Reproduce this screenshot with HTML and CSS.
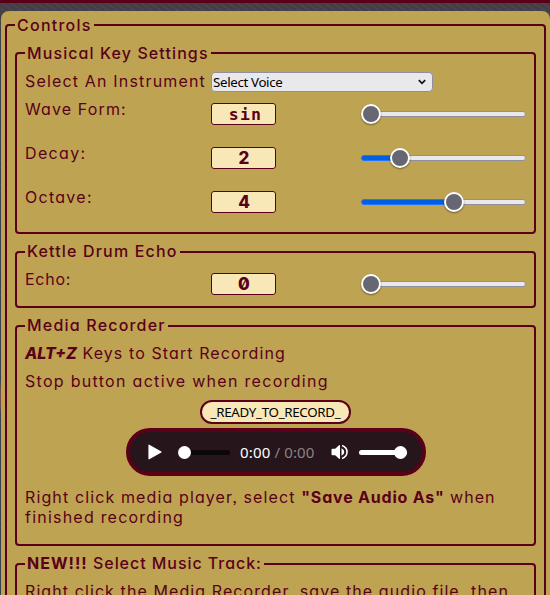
FILE: index.html
```html
<!DOCTYPE html>
<html lang="en">
<head>
<meta charset="utf-8">
<title>Controls</title>
<link rel="stylesheet" href="styles.css">
</head>
<body>
<main class="panel">
  <fieldset class="group outer">
    <legend><span class="t-controls">Controls</span></legend>

    <fieldset class="group keys">
      <legend><span class="t-keys">Musical Key Settings</span></legend>
      <div class="instrument">
        <label class="t-instrument" for="voice">Select An Instrument</label>
        <div class="select" id="voice"><span>Select Voice</span>
          <svg width="10" height="8" viewBox="0 0 10 8"><path d="M1.8 2.2 5 5.4 8.2 2.2" fill="none" stroke="#111" stroke-width="1.7"/></svg>
        </div>
      </div>
      <div class="row"><span class="name t-wave">Wave Form:</span><output class="word">sin</output><div class="slider"><i class="fill" style="width:10px"></i><i class="thumb"></i></div></div>
      <div class="row"><span class="name t-decay">Decay:</span><output>2</output><div class="slider"><i class="fill" style="width:39px"></i><i class="thumb"></i></div></div>
      <div class="row"><span class="name t-octave">Octave:</span><output>4</output><div class="slider"><i class="fill" style="width:93px"></i><i class="thumb"></i></div></div>
    </fieldset>

    <fieldset class="group echo">
      <legend><span class="t-kettle">Kettle Drum Echo</span></legend>
      <div class="row"><span class="name t-echo">Echo:</span><output>0</output><div class="slider"><i class="fill" style="width:10px"></i><i class="thumb"></i></div></div>
    </fieldset>

    <fieldset class="group recorder">
      <legend><span class="t-media">Media Recorder</span></legend>
      <p class="first"><b class="alt">ALT+Z</b> <span class="t-start">Keys to Start Recording</span></p>
      <p><span class="t-stop">Stop button active when recording</span></p>
      <div class="ready"><span>_READY_TO_RECORD_</span></div>
      <div class="player">
        <svg class="play" width="14" height="16" viewBox="0 0 14 16"><path d="M1 1.2 13 8 1 14.8Z" fill="#fff" stroke="#fff" stroke-width="1.2" stroke-linejoin="round"/></svg>
        <div class="seek"><i></i></div>
        <div class="time">0:00 <span>/ 0:00</span></div>
        <svg class="speaker" width="18" height="16" viewBox="0 0 18 16"><path d="M1.5 4.7h2.7L8 1.2q1-.8 1 .5v12.6q0 1.3-1 .5L4.200 11.300H1.500Q.5 11.300.5 10.300V5.700Q.5 4.700 1.500 4.700Z" fill="#fff"/><path d="M10.500 4.200q2.800 1.100 2.800 3.800t-2.800 3.800Z" fill="#fff"/><path d="M11 1.500Q16 3.200 16 8t-5 6.500" fill="none" stroke="#fff" stroke-width="1.600"/></svg>
        <div class="volume"><i></i></div>
      </div>
      <p class="hint"><span class="t-right">Right click media player, select </span><b class="t-save">"Save Audio As"</b><span> when</span><br><span class="t-finished">finished recording</span></p>
    </fieldset>

    <fieldset class="group track">
      <legend><b class="t-new">NEW!!!</b> <span class="t-track">Select Music Track:</span></legend>
      <p class="first"><span class="t-last">Right click the Media Recorder, save the audio file, then</span></p>
    </fieldset>
  </fieldset>
</main>
</body>
</html>
```
FILE: styles.css
```css
* { box-sizing: border-box; }
html { height: 595px; overflow: hidden; }
body {
  margin: 0;
  height: 595px;
  overflow: hidden;
  padding: 8px 0 0 1px;
  border-top: 3px solid #5a0018;
  background:
    repeating-linear-gradient(35deg, rgba(255, 255, 255, .03) 0 2px, transparent 2px 5px),
    linear-gradient(#443e46 0 12px, #34404f 60px 240px, #34404f 380px, #734b43 390px 405px, #34404f 415px);
  color: #5a0018;
  font: 400 16px/20px Inter, sans-serif;
  font-feature-settings: "cv11", "ss03";
  letter-spacing: 1px;
}
.panel {
  height: 584px;
  overflow: hidden;
  padding: 4px;
  background: #bea452;
  border-radius: 8px 8px 0 0;
}
.group {
  margin: 0;
  min-width: 0;
  border: 2px solid #5a0018;
  border-radius: 4px;
  padding: 8px;
}
.outer { width: 541px; height: 640px; }
.group .group { width: 521px; margin-bottom: 8px; }
legend {
  height: 20px;
  padding: 0 2px;
  font-weight: 500;
  white-space: nowrap;
}
.echo legend, .recorder legend, .track legend { line-height: 18px; }
.group .keys { height: 191px; }
.group .echo { height: 66px; }
.group .recorder { height: 230px; }
.group .track { height: 80px; }

.instrument { display: flex; height: 21px; white-space: nowrap; }
.instrument label { width: 186px; }
.select {
  display: flex;
  align-items: center;
  justify-content: space-between;
  width: 222px;
  height: 20px;
  margin-top: 1px;
  padding: 0 5px 0 1px;
  border: 1px solid #8f8f9d;
  border-radius: 4px;
  background: #e9e9ed;
  color: #000;
  font: 13.333px/18px "Noto Sans", sans-serif;
  letter-spacing: -.35px;
}
.row {
  display: grid;
  grid-template-columns: 186px 65px 250px;
  height: 44px;
  padding-top: 7px;
}
.echo .row { height: 36px; padding-top: 0; margin-top: -1px; }
output {
  height: 22px;
  margin-top: 4px;
  padding-left: 2px;
  border: 1px solid #5a0018;
  border-radius: 3px;
  background: #f9e8b7;
  font: 800 17px/21px Inter, sans-serif;
  font-feature-settings: "zero";
  text-align: center;
}
.word {
  padding-left: 4px;
  font: bold 16.5px/21px "DejaVu Sans Mono", monospace;
  letter-spacing: 1.2px;
}
.slider {
  display: flex;
  align-items: center;
  height: 6px;
  margin: 12px 0 0 85px;
  border: 1px solid #8f8f9d;
  border-radius: 3px;
  background: #e9e9ed;
}
.fill {
  flex: none;
  height: 6px;
  margin-left: -1px;
  border-radius: 3px 0 0 3px;
  border: 1px solid #2374ff;
  background: #0060df;
}
.thumb {
  flex: none;
  width: 20px;
  height: 20px;
  margin-left: -10px;
  border: 2px solid #fff;
  border-radius: 50%;
  background: #676774;
  box-shadow: 0 1px 2px rgba(0, 0, 0, .45);
}

p { margin: 0 0 8px; white-space: nowrap; }
.first { margin-top: -1px; }
b { font-weight: 700; }
.alt { font-weight: 800; font-style: italic; letter-spacing: 0; }
.ready {
  width: 151px;
  height: 24px;
  margin: 9px auto 4px 175px;
  border: 2px solid #5a0018;
  border-radius: 12px;
  background: #f9e8b7;
  color: #000;
  font: 13.333px/20px "Noto Sans", sans-serif;
  letter-spacing: -.3px;
  text-align: center;
  white-space: nowrap;
}
.player {
  display: flex;
  align-items: center;
  width: 300px;
  height: 48px;
  margin-left: 101px;
  padding-left: 18px;
  border: 4px solid #5a0018;
  border-radius: 24px;
  background: #26151a;
}
.seek {
  display: flex;
  align-items: center;
  width: 52px;
  height: 5px;
  margin-left: 16px;
  border-radius: 3px;
  background: #0d0709;
}
.seek i, .volume i {
  width: 13px;
  height: 13px;
  border-radius: 50%;
  background: #fff;
}
.time {
  width: 76px;
  margin: -1px 0 0 10px;
  color: #fff;
  font: 15px/20px "Noto Sans", sans-serif;
  letter-spacing: .15px;
  white-space: nowrap;
}
.time span { color: #8b8184; }
.speaker { margin-left: 15px; }
.volume {
  display: flex;
  align-items: center;
  justify-content: flex-end;
  width: 48px;
  height: 5px;
  margin-left: 10px;
  border-radius: 3px;
  background: #fff;
}
.hint { margin-top: 11px; }

.t-controls { letter-spacing: 1.25px; }
.t-keys { letter-spacing: 1.1px; }
.t-instrument { letter-spacing: 1.17px; }
.t-wave { letter-spacing: 1.12px; }
.t-decay { letter-spacing: 1.35px; }
.t-octave { letter-spacing: 1.28px; }
.t-echo { letter-spacing: .75px; }
.t-kettle { letter-spacing: 1.16px; }
.t-media { letter-spacing: 1.2px; }
.t-start { letter-spacing: 1.1px; }
.t-stop { letter-spacing: 1.3px; }
.t-right { letter-spacing: 1.12px; }
.t-save { letter-spacing: .8px; }
.t-finished { letter-spacing: 1.22px; }
.t-track { letter-spacing: .95px; }
.t-last { letter-spacing: 1.09px; }
```
